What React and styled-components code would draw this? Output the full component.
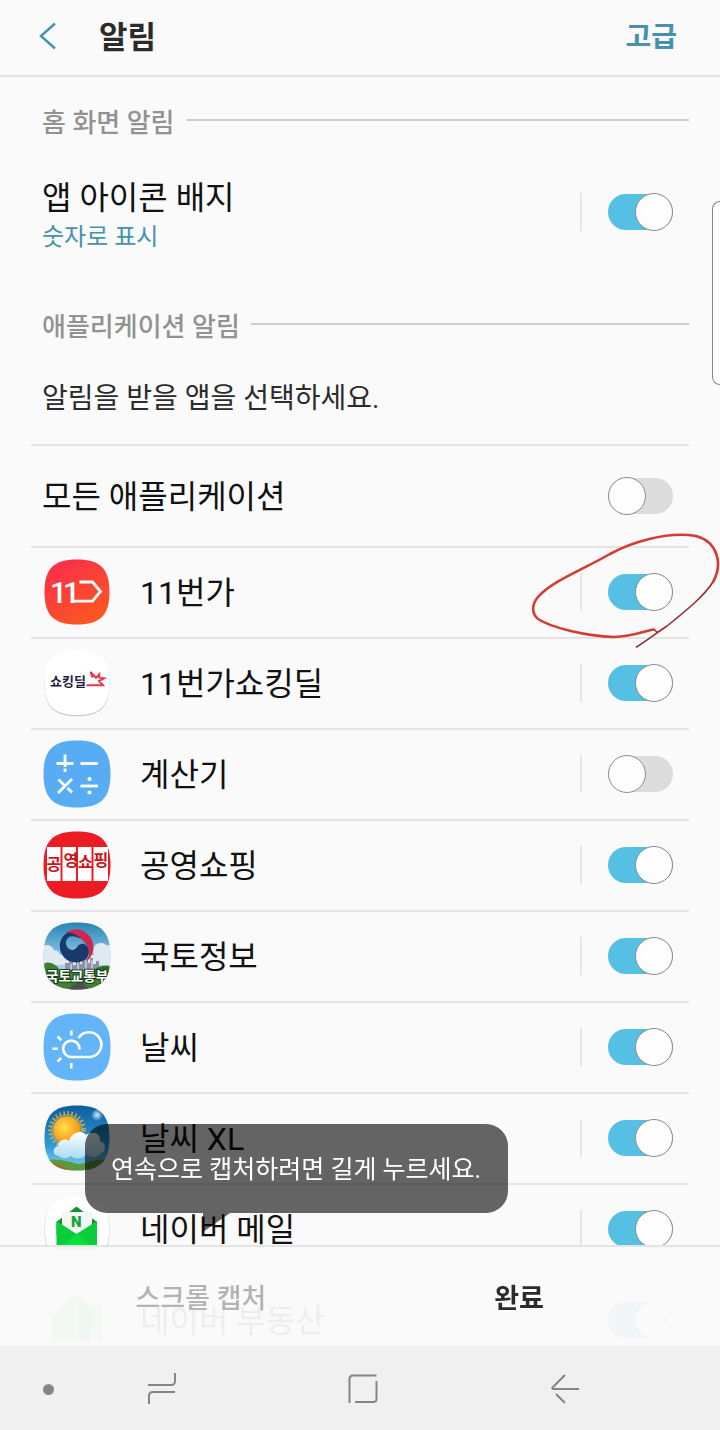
import React, { useState } from 'react';
import styled, { createGlobalStyle } from 'styled-components';

const SQUIRCLE =
  'M34 0.5C58 0.5 67.5 10 67.5 34S58 67.5 34 67.5 0.5 58 0.5 34 10 0.5 34 0.5Z';

const ElevenIcon = () => (
  <IconSvg viewBox="0 0 68 68" aria-hidden="true">
    <defs>
      <linearGradient id="eleven" x1="0.2" y1="0" x2="0.8" y2="1">
        <stop offset="0" stopColor="#fb2d4b" />
        <stop offset="1" stopColor="#fb5a1e" />
      </linearGradient>
    </defs>
    <path d={SQUIRCLE} fill="url(#eleven)" transform="translate(1 1) scale(0.97)" />
    <LogoText x="7 20" y="44.500" fontSize="30" fontWeight="500" fill="#fff">
      11
    </LogoText>
    <path
      d="M36.500 24H49.500L57.500 33.500L49.500 43.200H29"
      fill="none"
      stroke="#fff"
      strokeWidth="2.800"
    />
  </IconSvg>
);

const ShockingDealIcon = () => (
  <IconSvg viewBox="0 0 68 68" aria-hidden="true">
    <path d={SQUIRCLE} fill="#c9c9c9" transform="translate(1 1.800) scale(0.97)" />
    <path d={SQUIRCLE} fill="#fff" transform="translate(1 0.600) scale(0.97)" />
    <LogoText x="7" y="37" fontSize="13" fontWeight="700" fill="#1d1a3d">
      쇼킹딜
    </LogoText>
    <path
      d="M43.500 36.300H60L56 32L61 29.300L56.300 28.700V25.300L53 28.700L47.500 23L49.500 28.700"
      fill="none"
      stroke="#e23a4a"
      strokeWidth="2"
    />
  </IconSvg>
);

const CalculatorIcon = () => (
  <IconSvg viewBox="0 0 68 68" aria-hidden="true">
    <path d={SQUIRCLE} fill="#57acf3" />
    <g stroke="#fff" strokeWidth="2.800" fill="none">
      <path d="M13.500 23.500H30.500M22 14.500V27M22 28.500V32" />
      <path d="M37.500 23.500H55" />
      <path d="M15 53L29 39M15.500 39.500L21 45M24.500 48L29 52.500" />
      <path d="M37.500 46H55" />
    </g>
    <circle cx="46.500" cy="39" r="2.100" fill="#fff" />
    <circle cx="46.500" cy="52.500" r="2.100" fill="#fff" />
  </IconSvg>
);

const PublicShoppingIcon = () => (
  <IconSvg viewBox="0 0 68 68" aria-hidden="true">
    <clipPath id="shopClip">
      <path d={SQUIRCLE} />
    </clipPath>
    <g clipPath="url(#shopClip)">
      <rect width="68" height="68" fill="#ec1c24" />
      <path
        d="M4 16H17.500V50H4ZM19.500 16H33V50H19.500ZM35 16H48.500V50H35ZM50.500 16H65V50H50.500Z"
        fill="#fff"
      />
      <LogoText
        x="3.600 20.500 35 50.600"
        y="39 35 37 35"
        fontSize="16"
        fontWeight="700"
        fill="#c9141c"
      >
        공영쇼핑
      </LogoText>
    </g>
  </IconSvg>
);

const LandInfoIcon = () => (
  <IconSvg viewBox="0 0 68 68" aria-hidden="true">
    <defs>
      <clipPath id="landClip">
        <path d={SQUIRCLE} />
      </clipPath>
      <linearGradient id="landSky" x1="0" y1="0" x2="0" y2="1">
        <stop offset="0" stopColor="#2583b5" />
        <stop offset="0.5" stopColor="#8cc5e0" />
        <stop offset="1" stopColor="#dcecf2" />
      </linearGradient>
    </defs>
    <g clipPath="url(#landClip)">
      <rect width="68" height="68" fill="url(#landSky)" />
      <g fill="#dfe9f0">
        <circle cx="4" cy="30" r="7" />
        <circle cx="11" cy="34" r="6" />
        <circle cx="58" cy="29" r="8" />
        <circle cx="66" cy="32" r="9" />
        <rect x="0" y="33" width="68" height="10" />
      </g>
      <path
        d="M22 52V41H26V38H30V43H33V38H37V42H39V37H42V35H45V41H47V36H50V42H53V39H56V52Z"
        fill="#8b93a6"
      />
      <path d="M28 52V42M35 52V40M43 52V38M49 52V38" stroke="#eceff5" strokeWidth="1" />
      <path d="M0 42C6 38 13 42 17 48H68V68H0Z" fill="#3f7f31" />
      <path d="M52 47C58 43 64 43 68 45V55H50Z" fill="#2f6b2a" />
      <path d="M24 68L38 58L46 68Z" fill="#4b514e" />
      <path
        d="M23 11C30 4 43 7 48 16C53 26 50 34 43 40C47 33 47 26 42 21C39 16 30 10 23 11Z"
        fill="#d3264f"
      />
      <path
        d="M24 11C17 15 14 25 20 34C26 42 37 42 43 37C49 31 45 20 38 22C34 23 34 28 29 28C22 27 21 18 26 15C30 13 34 15 38 17C34 12 28 10 24 11Z"
        fill="#153a6b"
      />
      <LogoText
        x="3"
        y="59"
        fontSize="13.500"
        fontWeight="700"
        fill="#fff"
        stroke="#173d19"
        strokeWidth="2"
        paintOrder="stroke"
      >
        국토교통부
      </LogoText>
    </g>
  </IconSvg>
);

const WeatherIcon = () => (
  <IconSvg viewBox="0 0 68 68" aria-hidden="true">
    <path d={SQUIRCLE} fill="#63b4f9" />
    <g fill="none" stroke="#fff" strokeWidth="2.600">
      <path d="M36.500 36.500A8.200 8.200 0 1 0 28.500 44H47A12.400 12.400 0 1 0 35.500 25" />
      <path d="M28.300 17.500V22.500M14.500 23.500L18.300 27.200M9.500 35.700H14.700M14.500 48.500L18.300 45M28.300 50V55.500" />
    </g>
  </IconSvg>
);

const WeatherXlIcon = () => (
  <IconSvg viewBox="0 0 68 68" aria-hidden="true">
    <defs>
      <clipPath id="xlClip">
        <path d={SQUIRCLE} transform="translate(1 1) scale(0.97)" />
      </clipPath>
      <linearGradient id="xlSky" x1="0" y1="0" x2="0" y2="1">
        <stop offset="0" stopColor="#0d5a9c" />
        <stop offset="0.6" stopColor="#2b9ad6" />
        <stop offset="1" stopColor="#8fd3ee" />
      </linearGradient>
      <radialGradient id="xlSun" cx="0.4" cy="0.4" r="0.7">
        <stop offset="0" stopColor="#ffe24a" />
        <stop offset="1" stopColor="#f7860a" />
      </radialGradient>
      <radialGradient id="xlGlow">
        <stop offset="0" stopColor="#d4f0ff" />
        <stop offset="1" stopColor="#d4f0ff" stopOpacity="0" />
      </radialGradient>
      <linearGradient id="xlCloud" x1="0" y1="0" x2="0" y2="1">
        <stop offset="0" stopColor="#ffffff" />
        <stop offset="1" stopColor="#a9dcf4" />
      </linearGradient>
    </defs>
    <g clipPath="url(#xlClip)">
      <rect width="68" height="68" fill="url(#xlSky)" />
      <circle cx="54" cy="11" r="6" fill="url(#xlGlow)" />
      <circle cx="24" cy="26" r="16" fill="#e8b23c" opacity="0.5" />
      <circle
        cx="24"
        cy="26"
        r="17"
        fill="none"
        stroke="#f3b73a"
        strokeWidth="4"
        strokeDasharray="1.500 2.500"
        opacity="0.8"
      />
      <circle cx="24" cy="26" r="13.500" fill="url(#xlSun)" />
      <path d="M0 57C14 53 26 58 36 60C48 58 58 53 68 57V68H0Z" fill="#5d9a3a" />
      <path d="M0 60C10 57 20 62 30 68H0Z" fill="#a1702f" />
      <path
        d="M16 52C9 52 9 43 15 42C15 35 24 34 26 37C28 29 38 25 43 31C50 26 58 30 57 37C64 39 63 48 57 50C53 55 46 53 44 51C38 56 30 55 28 52C24 55 18 55 16 52Z"
        fill="url(#xlCloud)"
      />
    </g>
  </IconSvg>
);

const MailIcon = () => (
  <IconSvg viewBox="0 0 68 68" aria-hidden="true">
    <path d={SQUIRCLE} fill="#d9cfcf" transform="translate(1 1.500) scale(0.97)" />
    <path d={SQUIRCLE} fill="#fff" transform="translate(1.500 1) scale(0.956)" />
    <path d="M33.500 11.500L54 27V40H13.500V27Z" fill="#119036" />
    <path d="M19 17H49V33L33.500 44L19 33Z" fill="#f3f6f3" />
    <path d="M13.500 26L33.500 39L54 26V55H13.500Z" fill="#0bcd3b" />
    <path d="M13.500 55L33.500 39L54 55Z" fill="#06e23b" />
    <LogoText x="28" y="32" fontSize="15" fontWeight="900" fill="#12a53d">
      N
    </LogoText>
  </IconSvg>
);

const HouseIcon = () => (
  <IconSvg viewBox="0 0 68 68" aria-hidden="true">
    <path d={SQUIRCLE} fill="#fff" />
    <path d="M34 8L48 20V17H59V55H9V29Z" fill="#6be37c" />
    <path d="M36 12L48 22V55H36Z" fill="#48c45d" />
    <path d="M48 46L55 55H48Z" fill="#fff" />
  </IconSvg>
);

const APPS = [
  { id: 'eleven', name: '11번가', icon: ElevenIcon, on: true, marked: true },
  { id: 'deal', name: '11번가쇼킹딜', icon: ShockingDealIcon, on: true },
  { id: 'calc', name: '계산기', icon: CalculatorIcon, on: false },
  { id: 'public', name: '공영쇼핑', icon: PublicShoppingIcon, on: true },
  { id: 'land', name: '국토정보', icon: LandInfoIcon, on: true },
  { id: 'weather', name: '날씨', icon: WeatherIcon, on: true },
  { id: 'weatherxl', name: '날씨 XL', icon: WeatherXlIcon, on: true },
  { id: 'mail', name: '네이버 메일', icon: MailIcon, on: true },
  { id: 'house', name: '네이버 부동산', icon: HouseIcon, on: true },
];

const Toggle = ({ id, defaultOn, divided }) => {
  const [on, setOn] = useState(defaultOn);

  return (
    <ToggleBox $divided={divided}>
      <Switch
        id={id}
        type="checkbox"
        role="switch"
        checked={on}
        onChange={() => setOn(!on)}
      />
    </ToggleBox>
  );
};

const App = () => {
  return (
    <>
      <GlobalStyle />
      <Header>
        <BackButton type="button" aria-label="뒤로">
          <svg width="18" height="28" viewBox="0 0 18 28" aria-hidden="true">
            <path d="M16 1.500L2 14L16 26.500" fill="none" stroke="#4593ab" strokeWidth="2.400" />
          </svg>
        </BackButton>
        <Title>알림</Title>
        <Advanced href="#advanced">고급</Advanced>
      </Header>

      <Main>
        <SectionTitle>홈 화면 알림</SectionTitle>
        <BadgeRow>
          <BadgeText>
            <RowLabel htmlFor="badge">앱 아이콘 배지</RowLabel>
            <BadgeState>숫자로 표시</BadgeState>
          </BadgeText>
          <Toggle id="badge" defaultOn divided />
        </BadgeRow>

        <SectionTitle $spaced>애플리케이션 알림</SectionTitle>
        <Guide>알림을 받을 앱을 선택하세요.</Guide>

        <AllRow>
          <RowLabel htmlFor="all">모든 애플리케이션</RowLabel>
          <Toggle id="all" defaultOn={false} />
        </AllRow>
        <AppList>
          {APPS.map(({ id, name, icon: Icon, on, marked }) => (
            <AppRow key={id}>
              <Icon />
              <RowLabel htmlFor={id}>{name}</RowLabel>
              <Toggle id={id} defaultOn={on} divided />
              {marked && (
                <PenMark viewBox="0 0 200 120" aria-hidden="true">
                  <path
                    d="M116.500 117C126 111 135 104 147 96C167 80 184 66 193 52L137 102L134 99.500"
                    stroke="none"
                  />
                  <path
                    d="M116.500 117C126 111 135 104 147 96C167 80 184 66 193 52M134 99.500L137 102"
                    stroke="#8f2f38"
                    strokeWidth="1.600"
                  />
                  <path
                    d="M193 52C203 34 198 12 176 6C146 1 110 13 90 24C66 38 32 51 18 67C12 74 11 83 18 89C32 98 66 106 94 107C112 107 128 100 134 99.500"
                    stroke="#d33b34"
                    strokeWidth="2.600"
                  />
                </PenMark>
              )}
            </AppRow>
          ))}
        </AppList>
      </Main>

      <EdgeHandle type="button" aria-label="엣지 패널" />

      <Bottom>
        <CaptureBar>
          <CaptureButton type="button" $dim>
            스크롤 캡처
          </CaptureButton>
          <CaptureButton type="button">완료</CaptureButton>
          <Bubble role="tooltip">연속으로 캡처하려면 길게 누르세요.</Bubble>
        </CaptureBar>
        <NavBar>
          <DotButton type="button" aria-label="내비게이션 바 숨기기" />
          <NavButton type="button" aria-label="최근 앱">
            <svg width="32" height="34" viewBox="0 0 32 34">
              <path d="M29 1V9Q29 13 25 13H2M29 20H7Q3 20 3 24V32" />
            </svg>
          </NavButton>
          <NavButton type="button" aria-label="홈">
            <svg width="32" height="34" viewBox="0 0 32 34">
              <path d="M2.500 31V7Q2.500 3.500 6 3.500H29.500M29.500 9V26.500Q29.500 30 26 30H8" />
            </svg>
          </NavButton>
          <NavButton type="button" aria-label="이전">
            <svg width="32" height="34" viewBox="0 0 32 34">
              <path d="M16 3L4 15Q2 17 5 17H30M7 22L16 31" />
            </svg>
          </NavButton>
        </NavBar>
      </Bottom>
    </>
  );
};

export default App;

const GlobalStyle = createGlobalStyle`
  *,
  *::before,
  *::after {
    box-sizing: border-box;
  }

  body {
    margin: 0;
    background-color: #fafafa;
    color: #111;
    font-family: Roboto, 'Noto Sans CJK KR', sans-serif;
  }

  button {
    padding: 0;
    border: 0;
    background: none;
    font-family: inherit;
    cursor: pointer;
  }
`;

const Header = styled.header`
  display: flex;
  align-items: center;
  height: 77px;
  padding: 0 43px 0 31px;
  border-bottom: 2px solid #e4e4e4;
`;

const BackButton = styled.button`
  display: flex;
  align-items: center;
  justify-content: center;
  width: 34px;
  height: 48px;
  padding-bottom: 4px;
`;

const Title = styled.h1`
  flex: 1;
  margin: 0 0 0 34px;
  color: #2b2b2b;
  font-size: 31px;
  font-weight: 700;
  line-height: 40px;
`;

const Advanced = styled.a`
  color: #4593ab;
  font-size: 28px;
  font-weight: 700;
  line-height: 40px;
  text-decoration: none;
`;

const Main = styled.main`
  padding: 0 31px;
  overflow: hidden;
`;

const SectionTitle = styled.h2`
  display: flex;
  align-items: center;
  gap: 11px;
  height: 86px;
  margin: ${({ $spaced }) => ($spaced ? '20px' : '0')} 0 0;
  padding-left: 11px;
  color: #929292;
  font-size: 26px;
  font-weight: 500;

  &::after {
    content: '';
    flex: 1;
    height: 2px;
    background-color: #cdcdcd;
  }
`;

const BadgeRow = styled.div`
  display: flex;
  align-items: center;
  justify-content: space-between;
  height: 98px;
  padding: 0 16px 0 11px;
`;

const BadgeText = styled.div`
  display: flex;
  flex-direction: column;
  padding-top: 8px;
`;

const RowLabel = styled.label`
  padding-top: 2px;
  color: #111;
  font-size: 32px;
  line-height: 40px;
`;

const BadgeState = styled.span`
  color: #4593ab;
  font-size: 24px;
  line-height: 38px;
`;

const Guide = styled.p`
  margin: 0;
  padding: 12px 11px 25px;
  color: #2b2b2b;
  font-size: 28px;
  line-height: 40px;
`;

const AllRow = styled.div`
  display: flex;
  align-items: center;
  justify-content: space-between;
  height: 102px;
  padding: 0 16px 0 11px;
  border-top: 2px solid #e4e4e4;
`;

const AppList = styled.ul`
  margin: 0;
  padding: 0;
  list-style: none;
`;

const AppRow = styled.li`
  position: relative;
  display: grid;
  grid-template-columns: 68px 1fr auto;
  align-items: center;
  gap: 29px;
  height: 91px;
  padding: 0 16px 2px 12px;
  border-top: 2px solid #e4e4e4;
`;

const IconSvg = styled.svg`
  width: 68px;
  height: 68px;
`;

const LogoText = styled.text`
  font-family: Roboto, 'Noto Sans CJK KR', sans-serif;
`;

const ToggleBox = styled.span`
  display: flex;
  align-items: center;
  height: 38px;
  padding-left: 26px;
  border-left: 2px solid ${({ $divided }) => ($divided ? '#e6e6e6' : 'transparent')};
`;

const Switch = styled.input`
  appearance: none;
  display: flex;
  align-items: center;
  justify-content: flex-start;
  width: 65px;
  height: 36px;
  margin: 0;
  border-radius: 18px;
  background-color: #dcdcdc;
  cursor: pointer;

  &::before {
    content: '';
    flex: none;
    width: 38px;
    height: 38px;
    border: 1px solid #8d8d8d;
    border-radius: 50%;
    background-color: #fdfdfd;
  }

  &:checked {
    justify-content: flex-end;
    background-color: #56c0e4;
  }
`;

const PenMark = styled.svg`
  position: absolute;
  z-index: 1;
  top: -18px;
  right: -31px;
  width: 200px;
  height: 120px;
  fill: none;
  stroke-linecap: round;
  pointer-events: none;
`;

const EdgeHandle = styled.button`
  && {
    position: fixed;
    top: 201px;
    right: 0;
    width: 8px;
    height: 184px;
    border: 1px solid #858585;
    border-right: 0;
    border-radius: 8px 0 0 8px;
    background-color: #fff;
  }
`;

const Bottom = styled.footer`
  position: fixed;
  z-index: 2;
  right: 0;
  bottom: 0;
  left: 0;
`;

const CaptureBar = styled.div`
  position: relative;
  display: grid;
  grid-template-columns: 1fr 1fr;
  height: 101px;
  padding: 0 42px;
  border-top: 2px solid #e4e4e4;
  background-color: rgba(250, 250, 250, 0.95);
`;

const CaptureButton = styled.button`
  && {
    color: ${({ $dim }) => ($dim ? '#b3b3b3' : '#2b2b2b')};
    font-size: 27px;
    font-weight: ${({ $dim }) => ($dim ? 500 : 700)};
  }
`;

const Bubble = styled.div`
  position: absolute;
  bottom: 133px;
  left: 85px;
  padding: 26px 27px 23px 26px;
  border-radius: 22px;
  background-color: rgba(0, 0, 0, 0.6);
  color: #fff;
  font-size: 25px;
  line-height: 40px;
  white-space: nowrap;

  &::after {
    content: '';
    position: absolute;
    top: 100%;
    left: 118px;
    width: 27px;
    height: 19px;
    background-color: rgba(0, 0, 0, 0.6);
    clip-path: polygon(0 0, 100% 0, 0 100%);
  }
`;

const NavBar = styled.nav`
  display: grid;
  grid-template-columns: 61px repeat(3, 1fr) 54px;
  align-items: center;
  height: 84px;
  padding-top: 2px;
  background-color: #f0f0f0;
`;

const NavButton = styled.button`
  height: 60px;

  svg {
    display: block;
    margin: 0 auto;
    fill: none;
    stroke: #858585;
    stroke-width: 2;
  }
`;

const DotButton = styled.button`
  justify-self: end;
  display: flex;
  align-items: center;
  justify-content: center;
  width: 26px;
  height: 60px;

  &::before {
    content: '';
    width: 11px;
    height: 11px;
    border-radius: 50%;
    background-color: #858585;
  }
`;
